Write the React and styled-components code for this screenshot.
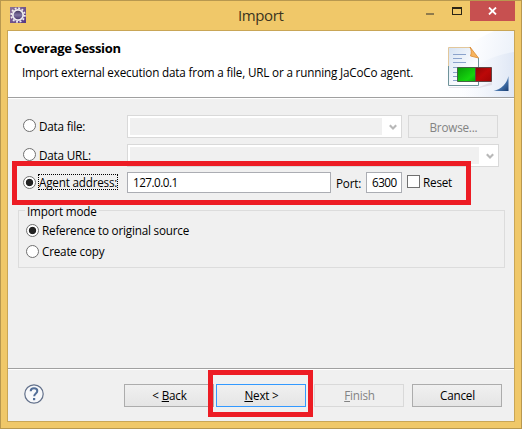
import React from "react";
import styled, { createGlobalStyle, css } from "styled-components";

const GlobalStyle = createGlobalStyle`
  *, *::before, *::after { box-sizing: border-box; }
  body { margin: 0; }
`;

const Window = styled.div`
  position: relative;
  width: 522px;
  height: 429px;
  display: flex;
  flex-direction: column;
  padding: 0 6px 6px;
  background: #f0c869;
  border: 1px solid #b8984f;
  font: 11.7px/16px "Open Sans", "Noto Sans", sans-serif;
  letter-spacing: -0.2px;
  color: #000;
  overflow: hidden;
`;

const TitleBar = styled.header`
  flex: 0 0 29px;
  display: flex;
  align-items: flex-start;
  padding-left: 3px;
`;

const AppIcon = styled.svg`
  flex: none;
  width: 16px;
  height: 16px;
  margin-top: 6px;
`;

const WindowTitle = styled.h1`
  flex: 1;
  margin: 4px 0 0 212px;
  font-size: 15px;
  font-weight: 400;
  line-height: 20px;
  letter-spacing: -0.4px;
  color: #3b3420;
`;

const Minimize = styled.span`
  width: 8px;
  height: 2px;
  margin: 12px 18px 0 0;
  background: #8f7b4c;
`;

const Maximize = styled.span`
  width: 10px;
  height: 8px;
  margin: 6px 8px 0 0;
  border: 1px solid #2b2415;
  border-top-width: 2px;
`;

const CloseButton = styled.span`
  width: 45px;
  height: 20px;
  display: grid;
  place-items: center;
  background: #c75050;
`;

const Client = styled.main`
  flex: 1;
  display: flex;
  flex-direction: column;
  border: 1px solid #c9a656;
  background: #f0f0f0;
`;

const Banner = styled.section`
  flex: 0 0 68px;
  display: flex;
  justify-content: space-between;
  background: #fff;
  border-bottom: 1px solid #fff;
  box-shadow: inset 0 -1px #a0a0a0;
`;

const BannerText = styled.div`
  padding: 8px 0 0 6px;
`;

const BannerTitle = styled.h2`
  margin: 0;
  font-size: 13px;
  font-weight: 700;
  line-height: 18px;
  letter-spacing: -0.33px;
`;

const BannerMessage = styled.p`
  margin: 7px 0 0 8px;
  white-space: nowrap;
  letter-spacing: -0.17px;
`;

const BannerArt = styled.svg`
  flex: none;
  width: 75px;
  height: 66px;
`;

const Body = styled.section`
  flex: 1;
  padding: 16px 9px 0 10px;
`;

const Row = styled.div`
  display: flex;
  align-items: center;
  height: ${({ $h = 23 }) => $h}px;
  margin: 0 5px ${({ $gap = 0 }) => $gap}px;
`;

const OptionLabel = styled.label`
  flex: 0 0 104px;
  display: flex;
  align-items: center;
  height: 16px;
  margin-top: ${({ $shift = 0 }) => $shift}px;
`;

const ModeOption = styled.label`
  display: flex;
  align-items: center;
  height: 16px;
  margin-bottom: 5px;
`;

const Radio = styled.span`
  flex: 0 0 13px;
  height: 13px;
  margin-right: 3px;
  border: 1px solid #707070;
  border-radius: 50%;
  background: ${({ $on }) => ($on ? "radial-gradient(circle, #222 0 3.3px, #fff 4.1px)" : "#fff")};
`;

const FocusText = styled.span`
  height: 16px;
  line-height: 14px;
  margin-left: -1px;
  width: 80px;
  white-space: nowrap;
  border: 1px dotted #000;
`;

const Combo = styled.div`
  flex: none;
  width: ${({ $w }) => $w}px;
  height: 23px;
  display: flex;
  align-items: center;
  padding: 2px;
  border: 1px solid #d9d9d9;
  background: #fff;
`;

const ComboValue = styled.span`
  flex: 1;
  height: 17px;
  background: #f0f0f0;
`;

const ArrowIcon = styled.svg`
  flex: none;
  width: 8px;
  height: 7px;
  margin: 1px 2px 0 7px;
`;

const Field = styled.div`
  flex: none;
  width: ${({ $w }) => $w}px;
  height: 21px;
  padding: 1px 0 0 5px;
  line-height: 17px;
  letter-spacing: -0.5px;
  border: 1px solid #abadb3;
  background: #fff;
`;

const Checkbox = styled.span`
  flex: none;
  width: 13px;
  height: 13px;
  margin: -2px 3px 0 5px;
  border: 1px solid #707070;
  background: #fff;
`;

const CheckLabel = styled.span`
  margin-top: -2px;
`;

const PortLabel = styled.span`
  flex: none;
  width: 30px;
  margin-left: 5px;
`;

const Button = styled.button`
  flex: none;
  width: 90px;
  height: 23px;
  padding: 0 0 0 1px;
  font: inherit;
  letter-spacing: inherit;
  color: #000;
  border: 1px solid #acacac;
  background: linear-gradient(#f0f0f0, #e5e5e5);
  ${({ $focus }) => $focus && css`border-color: #3399ff;`}
  &:disabled {
    color: #838383;
    border-color: #d9d9d9;
    background: #efefef;
  }
`;

const BrowseButton = styled(Button)`
  margin-left: 6px;
`;

const ModeGroup = styled.fieldset`
  height: 66px;
  width: 487px;
  margin: -8px 0 0;
  padding: 4px 7px 0;
  border: 1px solid #dcdcdc;
  min-width: 0;
`;

const ModeLegend = styled.legend`
  height: 16px;
  margin-left: -1px;
  padding: 0 2px;
  line-height: 18px;
  white-space: nowrap;
`;

const Footer = styled.footer`
  flex: 0 0 53px;
  display: flex;
  align-items: center;
  padding: 0 11px 0 16px;
  border-top: 1px solid #a0a0a0;
  box-shadow: inset 0 1px #fff;
`;

const HelpIcon = styled.svg`
  flex: none;
  width: 20px;
  height: 20px;
  margin: -3px 80px 0 0;
`;

const ButtonGroup = styled.div`
  display: flex;
  gap: ${({ $gap }) => $gap}px;
  & + & { margin-left: 8px; }
`;

const Highlight = styled.div`
  position: absolute;
  left: ${({ $x }) => $x}px;
  top: ${({ $y }) => $y}px;
  width: ${({ $w }) => $w}px;
  height: ${({ $h }) => $h}px;
  border: 5px solid #ed1c24;
  pointer-events: none;
`;

const Arrow = () => (
  <ArrowIcon viewBox="0 0 8 7">
    <path d="M.8 1.2 4 4.4 7.2 1.2" fill="none" stroke="#b8b8b8" strokeWidth="2.1" />
  </ArrowIcon>
);

const Gear = () => (
  <AppIcon viewBox="0 0 16 16">
    <defs>
      <linearGradient id="gearBg" x2="1" y2="1">
        <stop stopColor="#8d7496" />
        <stop offset="1" stopColor="#563784" />
      </linearGradient>
      <linearGradient id="gearCore" x2="0" y2="1">
        <stop stopColor="#33264f" />
        <stop offset=".5" stopColor="#8276a4" />
        <stop offset="1" stopColor="#3c2b62" />
      </linearGradient>
    </defs>
    <path fill="url(#gearBg)" d="M0 0h16v16H0z" />
    <circle cx="8" cy="8" r="6.8" fill="none" stroke="#efedf0" strokeWidth="1.8" strokeDasharray="1.9 1.66" />
    <circle cx="8" cy="8" r="5.2" fill="url(#gearCore)" stroke="#efedf0" strokeWidth="1.7" />
  </AppIcon>
);

const ReportArt = () => (
  <BannerArt viewBox="439 31 75 66">
    <defs>
      <linearGradient id="sky" x1="0" x2="1" y1="0" y2=".2">
        <stop stopColor="#fff" />
        <stop offset=".5" stopColor="#fcfdff" />
        <stop offset="1" stopColor="#edf2fa" />
      </linearGradient>
      <linearGradient id="sweep" x1="0" x2="1">
        <stop offset=".1" stopColor="#fff" stopOpacity="0" />
        <stop offset="1" stopColor="#dfe7f5" />
      </linearGradient>
      <linearGradient id="sheet" x2="1" y2="1">
        <stop stopColor="#d5e2f3" />
        <stop offset=".7" stopColor="#fff" />
      </linearGradient>
      <linearGradient id="pass" x2="1" y2="1">
        <stop stopColor="#079a07" />
        <stop offset=".7" stopColor="#16d50e" />
        <stop offset="1" stopColor="#09a80a" />
      </linearGradient>
      <linearGradient id="fail" x2="1" y2="1">
        <stop stopColor="#8c0606" />
        <stop offset=".5" stopColor="#bc0808" />
        <stop offset="1" stopColor="#a00505" />
      </linearGradient>
      <linearGradient id="corner" x2="1" y2="1">
        <stop offset=".35" stopColor="#a9c2de" />
        <stop offset=".65" stopColor="#3f6da6" />
        <stop offset="1" stopColor="#183b70" />
      </linearGradient>
    </defs>
    <path fill="url(#sky)" d="M514 31v66h-75c4-36 30-55 55-66z" />
    <path fill="url(#sweep)" d="M514 52v45h-66c12-26 39-41 66-45z" />
    <path d="M448.500 47.500h22l8 11v27h-30z" fill="url(#sheet)" />
    <path d="M448.500 85V47.500h22" fill="none" stroke="#e2c79b" />
    <path d="M478.500 58v27.500h-30V66" fill="none" stroke="#6f9399" />
    <path d="m470 47 8.500 11-8-2c1-3 1-6-.5-9z" fill="#f7b45d" stroke="#d98a32" strokeWidth=".8" />
    <path d="M453 54.500h13M453 58.500h9M453 62.500h13M453 67.500h5M453 72.500h4M453 76.500h4M453 80.500h5" stroke="#8ba3cc" strokeWidth="1.2" />
    <path d="M449 87h30l13-5v3l-13 3h-30z" fill="#b8a4b3" opacity=".25" />
    <path d="M457.500 67.500h18v14h-18z" fill="url(#pass)" stroke="#456345" />
    <path d="M475.500 67.500h16v14h-16z" fill="url(#fail)" stroke="#604444" />
    <path d="M508.500 76v15H493.500c8-2 13-7 15-15z" fill="url(#corner)" />
  </BannerArt>
);

const Help = () => (
  <HelpIcon viewBox="0 0 20 20">
    <circle cx="10" cy="10" r="9.200" fill="#f7f8fa" stroke="#63718b" strokeWidth="1.2" />
    <path d="M6.700 7.300C6.700 5 8 4.300 10 4.300s3.300 1 3.300 2.700c0 2.500-3.100 2.500-3.100 5.300" fill="none" stroke="#526e98" strokeWidth="2" />
    <path d="M9 14h2.200v2.200H9z" fill="#526e98" />
  </HelpIcon>
);

export default function App() {
  return (
    <>
      <GlobalStyle />
      <Window>
        <TitleBar>
          <Gear />
          <WindowTitle>Import</WindowTitle>
          <Minimize />
          <Maximize />
          <CloseButton>
            <svg width="9" height="8" viewBox="0 0 9 8">
              <path d="m1 .5 7 7m0-7-7 7" stroke="#fff" strokeWidth="1.8" />
            </svg>
          </CloseButton>
        </TitleBar>
        <Client>
          <Banner>
            <BannerText>
              <BannerTitle>Coverage Session</BannerTitle>
              <BannerMessage>Import external execution data from a file, URL or a running JaCoCo agent.</BannerMessage>
            </BannerText>
            <ReportArt />
          </Banner>
          <Body>
            <Row $gap={6}>
              <OptionLabel $shift={-2}><Radio />Data file:</OptionLabel>
              <Combo $w={275}><ComboValue /><Arrow /></Combo>
              <BrowseButton disabled>Browse...</BrowseButton>
            </Row>
            <Row $gap={5}>
              <OptionLabel $shift={-2}><Radio />Data URL:</OptionLabel>
              <Combo $w={372}><ComboValue /><Arrow /></Combo>
            </Row>
            <Row $h={21} $gap={17}>
              <OptionLabel $shift={-1}><Radio $on /><FocusText>Agent address:</FocusText></OptionLabel>
              <Field $w={204}>127.0.0.1</Field>
              <PortLabel>Port:</PortLabel>
              <Field $w={36}>6300</Field>
              <Checkbox /><CheckLabel>Reset</CheckLabel>
            </Row>
            <ModeGroup>
              <ModeLegend>Import mode</ModeLegend>
              <ModeOption><Radio $on />Reference to original source</ModeOption>
              <ModeOption><Radio />Create copy</ModeOption>
            </ModeGroup>
          </Body>
          <Footer>
            <Help />
            <ButtonGroup $gap={2}>
              <Button>&lt; <u>B</u>ack</Button>
              <Button $focus><u>N</u>ext &gt;</Button>
            </ButtonGroup>
            <ButtonGroup $gap={8}>
              <Button disabled><u>F</u>inish</Button>
              <Button>Cancel</Button>
            </ButtonGroup>
          </Footer>
        </Client>
        <Highlight $x={11} $y={160} $w={459} $h={44} />
        <Highlight $x={207} $y={369} $w={105} $h={47} />
      </Window>
    </>
  );
}
